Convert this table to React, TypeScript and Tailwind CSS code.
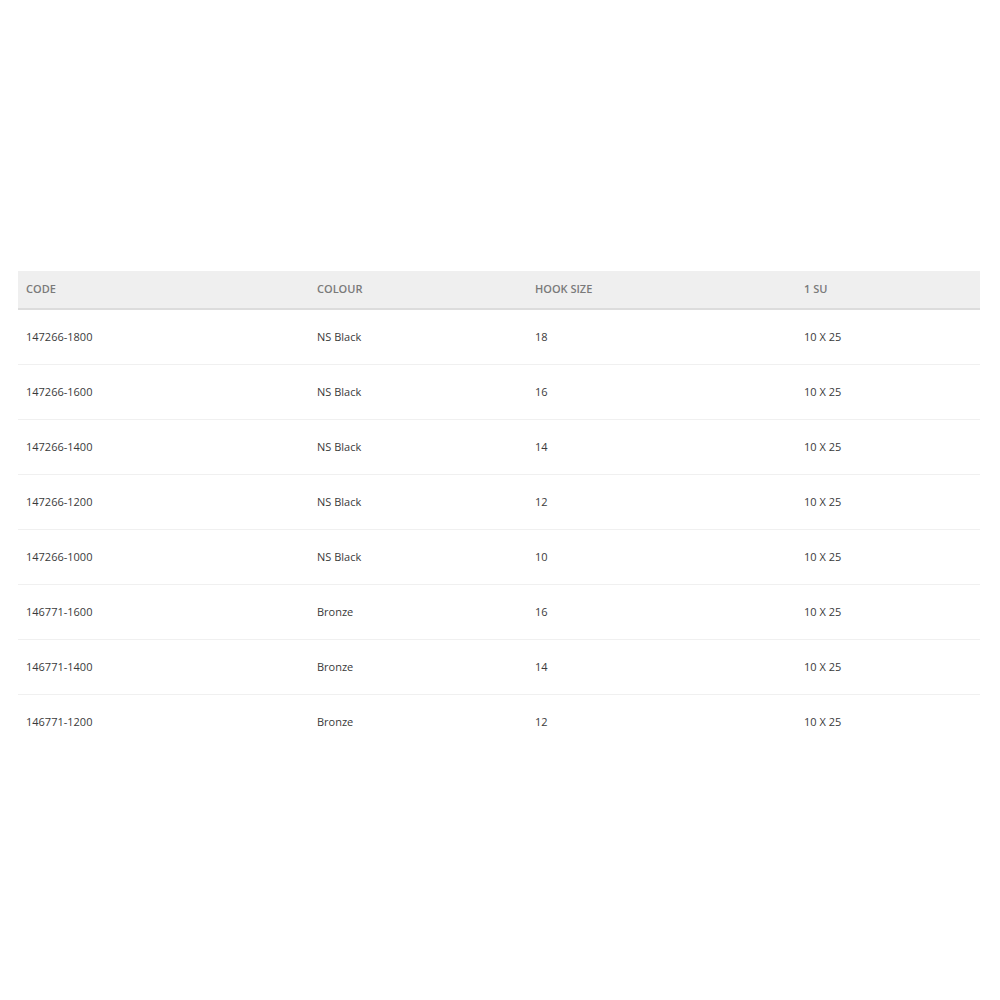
const rows = [
  { code: "147266-1800", colour: "NS Black", size: "18", su: "10 X 25" },
  { code: "147266-1600", colour: "NS Black", size: "16", su: "10 X 25" },
  { code: "147266-1400", colour: "NS Black", size: "14", su: "10 X 25" },
  { code: "147266-1200", colour: "NS Black", size: "12", su: "10 X 25" },
  { code: "147266-1000", colour: "NS Black", size: "10", su: "10 X 25" },
  { code: "146771-1600", colour: "Bronze", size: "16", su: "10 X 25" },
  { code: "146771-1400", colour: "Bronze", size: "14", su: "10 X 25" },
  { code: "146771-1200", colour: "Bronze", size: "12", su: "10 X 25" },
];

const cols = "grid grid-cols-[291px_218px_269px_184px]";

export default function App() {
  return (
    <div
      className="w-[1000px] h-[1000px] bg-white pt-[271px] px-[18px]"
      style={{ fontFamily: '"Open Sans", "Liberation Sans", sans-serif' }}
    >
      <div className="w-[962px]">
        <div className={`${cols} h-[39px] items-center bg-[#efefef] border-b-2 border-[#dcdcdc] text-[11px] font-semibold text-[#7a7a7a]`}>
          <div className="pl-2">CODE</div>
          <div className="pl-2">COLOUR</div>
          <div className="pl-2">HOOK SIZE</div>
          <div className="pl-2">1 SU</div>
        </div>
        {rows.map((r, i) => (
          <div
            key={r.code}
            className={`${cols} h-[55px] items-center text-[11px] text-[#3a3a3a] ${
              i < rows.length - 1 ? "border-b border-[#f0f0f0]" : ""
            }`}
          >
            <div className="pl-2">{r.code}</div>
            <div className="pl-2">{r.colour}</div>
            <div className="pl-2">{r.size}</div>
            <div className="pl-2">{r.su}</div>
          </div>
        ))}
      </div>
    </div>
  );
}
